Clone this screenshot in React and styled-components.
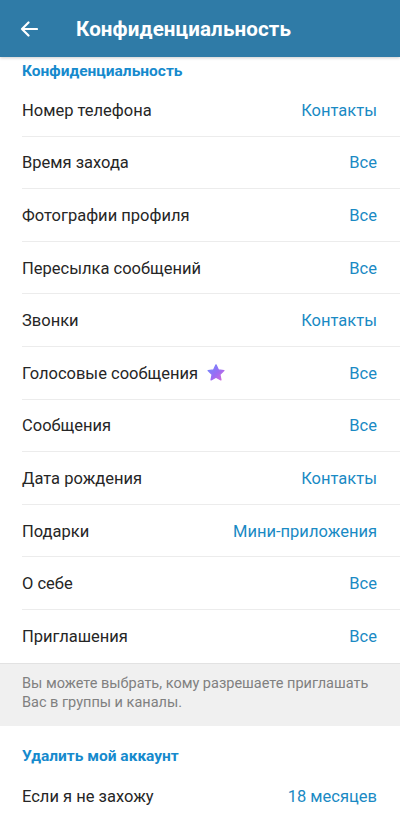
import styled, { createGlobalStyle } from 'styled-components'

const GlobalStyle = createGlobalStyle`
body {
  margin: 0;
  background: #ffffff;
  font-family: Roboto, "Noto Sans", sans-serif;
}
`

const Page = styled.div`
width: 400px;
height: 815px;
overflow: hidden;
background: #ffffff;
`

const Header = styled.div`
height: 57px;
background-color: #2f7ba7;
display: flex;
align-items: center;
position: relative;
z-index: 1;
box-shadow: 0 1px 3px rgba(0, 0, 0, 0.2);
`

const Back = styled.div`
width: 76px;
display: flex;
align-items: center;
padding-left: 20px;
box-sizing: border-box;
`

const HeaderTitle = styled.h1`
margin: 0;
color: #ffffff;
font-size: 20.6px;
font-weight: 700;
letter-spacing: 0.1px;
`

const SectionTitle = styled.div`
height: ${p => p.$h || 27}px;
padding: 0 22px;
display: flex;
align-items: ${p => p.$align || 'center'};
color: #168acd;
font-size: 15.5px;
font-weight: 700;
box-sizing: border-box;
padding-top: ${p => p.$pt || 0}px;
`

const Row = styled.div`
height: ${p => p.$h || 52.6}px;
margin-left: 22px;
padding-right: 23px;
display: flex;
align-items: center;
justify-content: space-between;
box-sizing: border-box;
border-bottom: ${p => (p.$last ? 'none' : '1px solid #ececec')};
`

const Label = styled.div`
display: flex;
align-items: center;
gap: 8px;
color: #262626;
font-size: 16.5px;
padding-top: 1px;
`

const Value = styled.div`
color: #1a8ac4;
font-size: 16.5px;
padding-top: 1px;
`

const Hint = styled.div`
background: #f0f0f0;
border-top: 1px solid #e2e2e2;
padding: 10px 22px 14px;
color: #808080;
font-size: 14.5px;
line-height: 19px;
`

const StarIcon = () => (
    <svg width="20" height="20" viewBox="0 0 24 24">
        <defs>
            <linearGradient id="starGrad" x1="0" y1="0" x2="1" y2="1">
                <stop offset="0%" stopColor="#6b8dff" />
                <stop offset="55%" stopColor="#9b6cf3" />
                <stop offset="100%" stopColor="#d86ad9" />
            </linearGradient>
        </defs>
        <path
            d="M12 2.2l2.9 6.1 6.6.8-4.9 4.6 1.3 6.6L12 17l-5.9 3.3 1.3-6.6-4.9-4.6 6.6-.8z"
            fill="url(#starGrad)"
            stroke="url(#starGrad)"
            strokeWidth="1.6"
            strokeLinejoin="round"
        />
    </svg>
)

const ArrowIcon = () => (
    <svg width="18" height="16" viewBox="0 0 18 16">
        <path d="M17 8H2M8.5 1.5L2 8l6.5 6.5" stroke="#ffffff" strokeWidth="2.2" fill="none" strokeLinecap="round" strokeLinejoin="round" />
    </svg>
)

const rows = [
    ['Номер телефона', 'Контакты'],
    ['Время захода', 'Все'],
    ['Фотографии профиля', 'Все'],
    ['Пересылка сообщений', 'Все'],
    ['Звонки', 'Контакты'],
    ['Голосовые сообщения', 'Все', true],
    ['Сообщения', 'Все'],
    ['Дата рождения', 'Контакты'],
    ['Подарки', 'Мини-приложения'],
    ['О себе', 'Все'],
    ['Приглашения', 'Все'],
]

const App = () => {
    return (
        <Page>
            <GlobalStyle />
            <Header>
                <Back><ArrowIcon /></Back>
                <HeaderTitle>Конфиденциальность</HeaderTitle>
            </Header>
            <SectionTitle $h={27} $pt={1}>Конфиденциальность</SectionTitle>
            {rows.map(([label, value, star], i) => (
                <Row key={label} $last={i === rows.length - 1}>
                    <Label>
                        {label}
                        {star && <StarIcon />}
                    </Label>
                    <Value>{value}</Value>
                </Row>
            ))}
            <Hint>
                Вы можете выбрать, кому разрешаете приглашать Вас в группы и каналы.
            </Hint>
            <SectionTitle $h={49} $pt={12}>Удалить мой аккаунт</SectionTitle>
            <Row $last $h={42}>
                <Label>Если я не захожу</Label>
                <Value>18 месяцев</Value>
            </Row>
        </Page>
    )
}

export default App
